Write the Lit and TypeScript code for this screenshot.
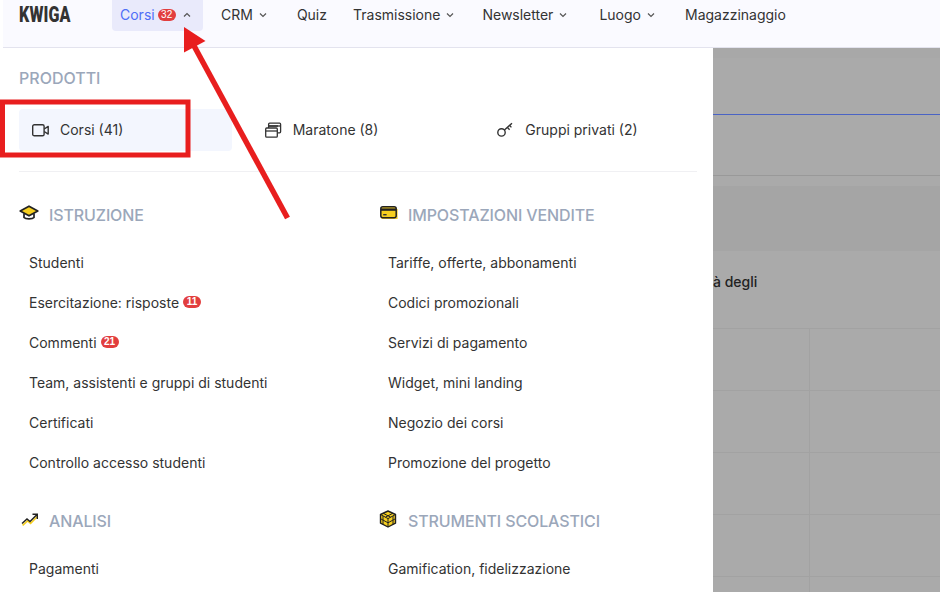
import { LitElement, html, css, svg } from "lit";
import { customElement } from "lit/decorators.js";

const chev = (up = false) => html`<svg class="chev" width="8" height="6" viewBox="0 0 8 6" fill="none" stroke="#555" stroke-width="1.2"><path d=${up ? "M1 4.5 4 1.5l3 3" : "M1 1.5l3 3 3-3"}/></svg>`;

const group = (icon: unknown, title: string, links: [string, string?][]) => html`
  <section class="group">
    <h3>${icon}<span>${title}</span></h3>
    ${links.map(([l, b]) => html`<a>${l}${b ? html`<b class="badge">${b}</b>` : ""}</a>`)}
  </section>`;

const capIcon = html`<svg class="gi" width="20" height="16" viewBox="0 0 20 16" fill="none"><path d="M10 1.2 18.8 6 10 10.8 1.2 6z" fill="#f6cf1f" stroke="#222" stroke-width="1.7" stroke-linejoin="round"/><path d="M5 8.5v4c1.5 1.8 8.5 1.8 10 0v-4" stroke="#222" stroke-width="1.7"/></svg>`;
const cardIcon = html`<svg class="gi card" width="18" height="14" viewBox="0 0 18 14" fill="none"><rect x="1" y="1" width="15.5" height="11" rx="2" fill="#f6cf1f"/><path d="M1.5 12.5h15.5V3" stroke="#f6cf1f" stroke-width="1.2"/><rect x=".8" y=".8" width="15.4" height="11" rx="2" stroke="#222" stroke-width="1.5"/><path d="M1 3.6h15" stroke="#222" stroke-width="2.4"/><path d="M3.2 8.7h3.4" stroke="#333" stroke-width="1.4"/></svg>`;
const chartIcon = html`<svg class="gi chart" width="18" height="13" viewBox="0 0 18 13" fill="none"><path d="M1 11.5 6 7l3 2.5 7-7" stroke="#f6cf1f" stroke-width="1.6" transform="translate(.6 .8)"/><path d="M1 10.5 6 6l3 2.5 7-7M11.5 1.2h4.8V6" stroke="#222" stroke-width="1.4"/></svg>`;
const cubeIcon = html`<svg class="gi cube" width="18" height="18" viewBox="0 0 18 18" fill="#f6cf1f" stroke="#222" stroke-width="1.4" stroke-linejoin="round"><path d="M9 1 16.5 4.5v8.7L9 17 1.5 13.2V4.5z"/><path fill="none" d="M1.5 4.5 9 8.6l7.5-4.1M9 8.6V17M4 3.2l7.5 3.9M14 3.2 6.5 7.1M1.5 8.7 9 12.8l7.5-4.1M4 6v8.5M14 6v8.5" stroke-width="1"/></svg>`;

const videoIcon = html`<svg width="17" height="13" viewBox="0 0 17 13" fill="none" stroke="#333" stroke-width="1.4"><rect x=".7" y=".7" width="11.4" height="11.1" rx="1.6"/><path d="M12.2 5 16.2 2.4v7.7L12.2 7.5" stroke-linejoin="round"/></svg>`;
const stackIcon = html`<svg width="17" height="16" viewBox="0 0 17 16" fill="none" stroke="#333" stroke-width="1.3"><rect x=".7" y="6" width="11.6" height="9.2" rx="1"/><path d="M.7 9h11.6"/><path d="M3.6 6V4h9.4v0M3.6 4V2.2a1 1 0 0 1 1-1h10a1 1 0 0 1 1 1v7.6a1 1 0 0 1-1 1h-2"/><path d="M3.6 4h12"/></svg>`;
const keyIcon = html`<svg width="16" height="16" viewBox="0 0 16 16" fill="none" stroke="#333" stroke-width="1.4"><circle cx="4.5" cy="10.4" r="3.7"/><path d="M7.4 8 15 1.2M10.4 5.4l2.2 2.4M12.6 3.4l1.8 2"/></svg>`;

@customElement("app-root")
export class AppRoot extends LitElement {
  static styles = css`
    :host { display: block; width: 940px; height: 592px; overflow: hidden; position: relative; background: #fff;
      font-family: Inter, "Liberation Sans", sans-serif; font-size: 14px; color: #333; }
    * { box-sizing: border-box; }
    header { height: 48px; margin-left: 3px; background: #fafaff; border-bottom: 1px solid #e3e3ee; display: flex; align-items: flex-start; padding-left: 16px; }
    .logo { width: 93px; height: 30px; line-height: 30px; font-family: "Roboto", sans-serif; font-weight: 900; font-size: 22px; color: #333; letter-spacing: .2px; }
    .logo span { display: inline-block; transform: scaleX(.73); transform-origin: 0 50%; }
    nav { display: flex; }
    .item { display: flex; align-items: center; height: 31px; padding: 0 8px 2px; color: #333; border-radius: 0 0 4px 4px; white-space: nowrap; }
    .item .chev { margin-left: 6px; }
    .item.active { background: #e9eafb; color: #4f6ef7; margin-right: 10px; width: 91px; }
    .item.active .chev { margin-left: 7px; }
    .crm { margin-right: 14px; }
    .quiz { margin-right: 10px; }
    .tx { margin-right: 12px; }
    .nl { margin-right: 16px; }
    .lg { margin-right: 14px; }
    .badge { display: inline-block; background: #e23e3e; color: #fff; font-family: "Liberation Sans", sans-serif; font-size: 10px; line-height: 12px; height: 12px; font-weight: 700; padding: 0 3px; border-radius: 6px; margin-left: 4px; min-width: 18px; text-align: center; }
    .active .badge { margin-left: 3px; font-weight: 400; }
    main { display: flex; height: 544px; }
    .panel { width: 713px; height: 544px; background: #fff; overflow: hidden; padding: 0 16px 0 19px; }
    .label { margin: 0; height: 61px; padding-top: 20px; line-height: 20px; font-size: 16px; font-weight: 500; color: #9ba7ba; }
    .products { display: grid; grid-template-columns: repeat(3, 1fr); gap: 20px; padding-bottom: 20px; border-bottom: 1px solid #f0f0f3; }
    .tile { height: 42px; display: flex; align-items: center; padding: 0 0 2px 13px; border-radius: 4px; color: #333; }
    .tile svg { flex: none; }
    .tile .ic { width: 28px; display: flex; margin-top: 2px; }
    .tile.on { background: #f3f6fe; }
    .cols { display: grid; grid-template-columns: 339px 339px; gap: 0 20px; padding-top: 33px; }
    .group { margin-bottom: 28px; }
    h3 { margin: 0; height: 20px; display: flex; align-items: center; font-size: 16px; font-weight: 500; letter-spacing: -.12px; color: #9ba7ba; margin-bottom: 18px; position: relative; padding-left: 30px; }
    .gi { position: absolute; left: 0; top: 0; }
    .gi.card { left: 2px; top: 1px; }
    .gi.chart { left: 2px; top: 2px; }
    .gi.cube { left: 1px; top: -1px; }
    a { display: flex; align-items: center; height: 40px; padding: 0 0 2px 10px; color: #333; }
    .shade { flex: 1; height: 544px; background: #aaa; display: flex; flex-direction: column; overflow: hidden; }
    .s1 { height: 10px; background: #a8a8a8; flex: none; }
    .s2 { height: 57px; border-bottom: 1px solid #4a63c4; flex: none; }
    .s3 { height: 61px; border-bottom: 1px solid #999; flex: none; }
    .s4 { height: 10px; flex: none; }
    .s5 { height: 65px; background: #a5a5a5; flex: none; }
    .s6 { height: 77px; padding-top: 22px; flex: none; font-weight: 500; line-height: 17px; color: #222; white-space: nowrap; }
    .row { height: 62px; flex: none; display: grid; grid-template-columns: 97px 1fr; border-top: 1px solid #a2a2a2; }
    .row i { display: block; border-right: 1px solid #a2a2a2; }
    .row i:last-child { border-right: 0; }
    .over { position: absolute; left: 0; top: 0; pointer-events: none; }
  `;

  render() {
    const rows = [0, 1, 2, 3, 4];
    return html`
      <header>
        <div class="logo"><span>KWIGA</span></div>
        <nav>
          <div class="item active">Corsi<b class="badge">32</b>${chev(true)}</div>
          <div class="item crm">CRM${chev()}</div>
          <div class="item quiz">Quiz</div>
          <div class="item tx">Trasmissione${chev()}</div>
          <div class="item nl">Newsletter${chev()}</div>
          <div class="item lg">Luogo${chev()}</div>
          <div class="item">Magazzinaggio</div>
        </nav>
      </header>
      <main>
        <div class="panel">
          <h2 class="label">PRODOTTI</h2>
          <div class="products">
            <div class="tile on"><span class="ic">${videoIcon}</span>Corsi (41)</div>
            <div class="tile"><span class="ic">${stackIcon}</span>Maratone (8)</div>
            <div class="tile"><span class="ic">${keyIcon}</span>Gruppi privati (2)</div>
          </div>
          <div class="cols">
            ${group(capIcon, "ISTRUZIONE", [["Studenti"], ["Esercitazione: risposte", "11"], ["Commenti", "21"], ["Team, assistenti e gruppi di studenti"], ["Certificati"], ["Controllo accesso studenti"]])}
            ${group(cardIcon, "IMPOSTAZIONI VENDITE", [["Tariffe, offerte, abbonamenti"], ["Codici promozionali"], ["Servizi di pagamento"], ["Widget, mini landing"], ["Negozio dei corsi"], ["Promozione del progetto"]])}
            ${group(chartIcon, "ANALISI", [["Pagamenti"]])}
            ${group(cubeIcon, "STRUMENTI SCOLASTICI", [["Gamification, fidelizzazione"]])}
          </div>
        </div>
        <div class="shade">
          <div class="s1"></div><div class="s2"></div><div class="s3"></div><div class="s4"></div><div class="s5"></div>
          <div class="s6">à degli</div>
          ${rows.map(() => html`<div class="row"><i></i><i></i></div>`)}
        </div>
      </main>
      <svg class="over" width="940" height="592" viewBox="0 0 940 592" fill="none">
        ${svg`<rect x="2.5" y="102" width="185.5" height="53" stroke="#e81e1e" stroke-width="5"/>
        <path d="M193 44 287.5 218" stroke="#e81e1e" stroke-width="5.5"/>
        <path d="M184 27 205.5 41 184 52.5z" fill="#e81e1e"/>`}
      </svg>
    `;
  }
}
